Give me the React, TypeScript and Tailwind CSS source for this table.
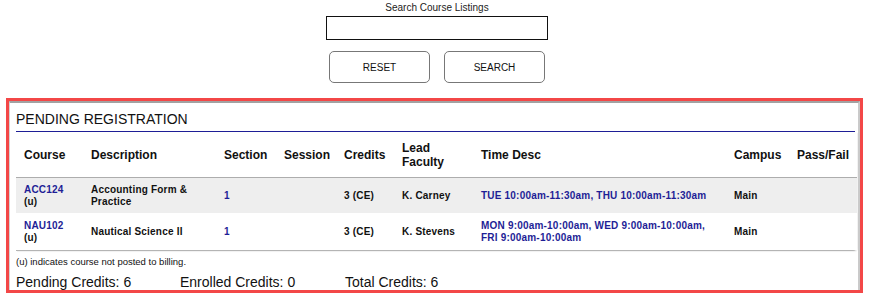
const LINK = "text-[#1e1e96]";

const cols = "grid grid-cols-[67px_133px_60px_60px_58px_79px_253px_63px_68px]";

interface Row {
  course: string;
  description: string;
  section: string;
  credits: string;
  faculty: string;
  time: string;
  campus: string;
  shaded: boolean;
  height: string;
}

const rows: Row[] = [
  {
    course: "ACC124",
    description: "Accounting Form & Practice",
    section: "1",
    credits: "3 (CE)",
    faculty: "K. Carney",
    time: "TUE 10:00am-11:30am, THU 10:00am-11:30am",
    campus: "Main",
    shaded: true,
    height: "h-[35px]",
  },
  {
    course: "NAU102",
    description: "Nautical Science II",
    section: "1",
    credits: "3 (CE)",
    faculty: "K. Stevens",
    time: "MON 9:00am-10:00am, WED 9:00am-10:00am, FRI 9:00am-10:00am",
    campus: "Main",
    shaded: false,
    height: "h-[37px]",
  },
];

function SearchBar() {
  return (
    <div className="flex flex-col items-center pl-[4px]">
      <label className="mt-[2px] text-[10px] leading-[12px] text-[#222]">
        Search Course Listings
      </label>
      <input
        type="text"
        className="mt-[2px] h-[24px] w-[222px] border border-[#111] bg-white outline-none"
      />
      <div className="mt-[11px] flex gap-[14px]">
        <button className="h-[32px] w-[101px] rounded-[5px] border border-[#777] bg-white text-[10px] text-[#111]">
          RESET
        </button>
        <button className="h-[32px] w-[101px] rounded-[5px] border border-[#777] bg-white text-[10px] text-[#111]">
          SEARCH
        </button>
      </div>
    </div>
  );
}

function PendingTable() {
  return (
    <div className="rounded-br-[4px] border-b border-[#b4b4b4] shadow-[1px_1px_1px_rgba(0,0,0,0.06)]">
      <div className={`${cols} h-[46px] items-center border-b border-[#adadad] text-[12px] font-bold leading-[14px] text-[#111]`}>
        <div className="pl-[8px]">Course</div>
        <div className="pl-[8px]">Description</div>
        <div className="pl-[8px]">Section</div>
        <div className="pl-[8px]">Session</div>
        <div className="pl-[8px]">Credits</div>
        <div className="pl-[8px]">
          Lead
          <br />
          Faculty
        </div>
        <div className="pl-[8px]">Time Desc</div>
        <div className="pl-[8px]">Campus</div>
        <div className="pl-[8px]">Pass/Fail</div>
      </div>
      {rows.map((r) => (
        <div
          key={r.course}
          className={`${cols} ${r.height} items-center text-[10px] font-bold leading-[12px] tracking-[0.2px] text-[#111] ${r.shaded ? "bg-[#eeeeee]" : "bg-white"}`}
        >
          <div className="pl-[8px]">
            <div className={LINK}>{r.course}</div>
            <div>(u)</div>
          </div>
          <div className="pl-[8px] pr-[4px]">{r.description}</div>
          <div className={`pl-[8px] ${LINK}`}>{r.section}</div>
          <div className="pl-[8px]"></div>
          <div className="pl-[8px]">{r.credits}</div>
          <div className="pl-[8px]">{r.faculty}</div>
          <div className={`pl-[8px] pr-[10px] ${LINK}`}>{r.time}</div>
          <div className="pl-[8px]">{r.campus}</div>
          <div className="pl-[8px]"></div>
        </div>
      ))}
    </div>
  );
}

export default function App() {
  return (
    <div className="h-[294px] w-[870px] overflow-hidden bg-white font-['Liberation_Sans',Arial,sans-serif]">
      <SearchBar />
      <div className="ml-[6px] mt-[15px] h-[195px] w-[857px] border-[3px] border-[#f34747]">
        <div className="h-full overflow-hidden border-l border-r-2 border-t-2 border-l-[#d4d4d4] border-r-[#cacaca] border-t-[#a2a2a2] pl-[6px] pr-[1px]">
          <div className="mr-[2px] border-b border-[#1e1e96] pb-[4px] pt-[8px] text-[14px] leading-[16px] text-[#111]">
            PENDING REGISTRATION
          </div>
          <PendingTable />
          <div className="mt-[5px] text-[9.5px] leading-[12px] text-[#111]">
            (u) indicates course not posted to billing.
          </div>
          <div className="mt-[6px] flex text-[14px] leading-[16px] text-[#111]">
            <span className="w-[164px]">Pending Credits: 6</span>
            <span className="w-[165px]">Enrolled Credits: 0</span>
            <span>Total Credits: 6</span>
          </div>
        </div>
      </div>
    </div>
  );
}
